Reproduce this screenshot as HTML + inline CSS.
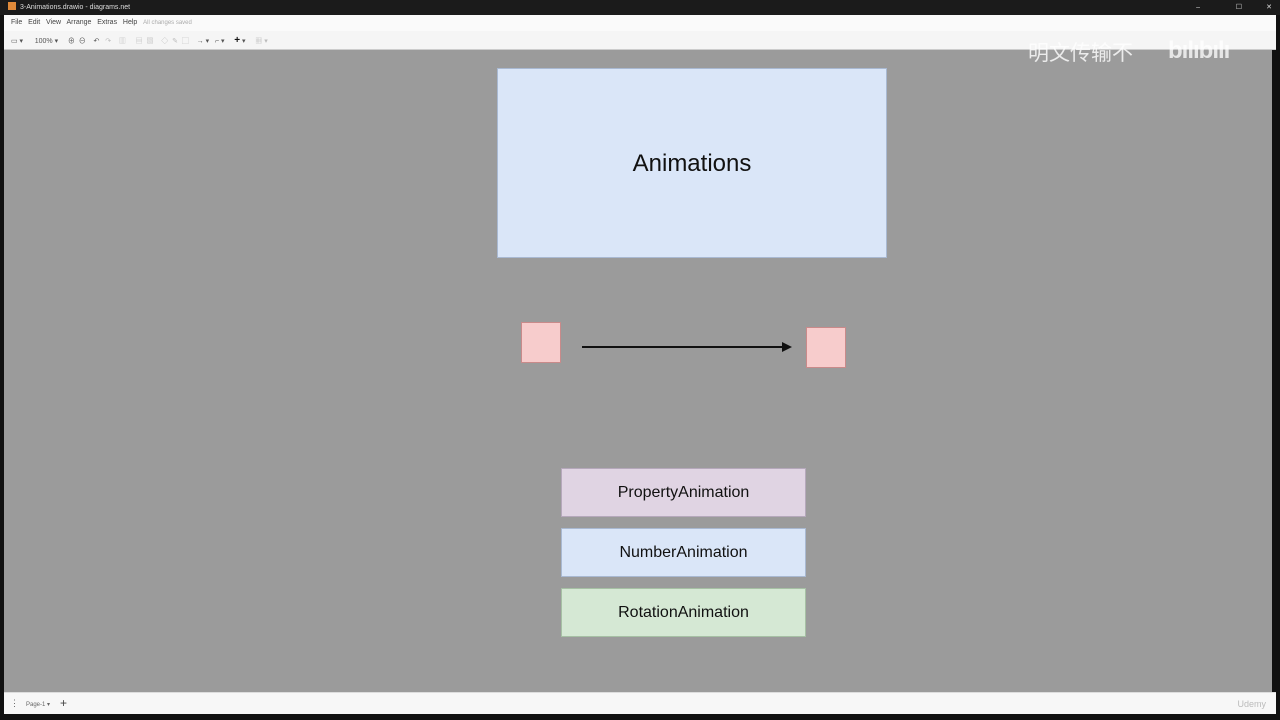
<!DOCTYPE html>
<html><head><meta charset="utf-8"><style>
*{margin:0;padding:0;box-sizing:border-box}
body{width:1280px;height:720px;overflow:hidden;background:#111;font-family:"Liberation Sans","Noto Sans CJK SC",sans-serif;position:relative}
.abs{position:absolute}
#title{left:0;top:0;width:1280px;height:15px;background:#1b1b1b;color:#ddd;font-size:7px;line-height:15px}
#menu{left:4px;top:15px;width:1272px;height:16px;background:#fafafa;font-size:7px;color:#444;line-height:16px}
#tool{left:4px;top:31px;width:1272px;height:19px;background:#f5f5f5;border-bottom:1px solid #ccc;font-size:7px;color:#555;line-height:19px}
#canvas{left:4px;top:50px;width:1268px;height:642px;background:#9b9b9b}
#bot{left:4px;top:692px;width:1272px;height:22px;background:#f7f7f7;border-top:1px solid #ddd;font-size:6px;color:#666}
.box{position:absolute;display:flex;align-items:center;justify-content:center;color:#111}
</style></head><body>
<div id="title" class="abs"><span style="display:inline-block;width:8px;height:8px;background:#e08a3a;margin:0 4px 0 8px;vertical-align:-1px"></span>3-Animations.drawio - diagrams.net
<span style="position:absolute;right:80px">–</span><span style="position:absolute;right:38px">☐</span><span style="position:absolute;right:8px">✕</span></div>
<div id="menu" class="abs"><span style="margin-left:7px">File&nbsp;&nbsp; Edit&nbsp;&nbsp; View&nbsp;&nbsp; Arrange&nbsp;&nbsp; Extras&nbsp;&nbsp; Help&nbsp;&nbsp; <span style="color:#aaa;font-size:6px">All changes saved</span></span></div>
<div id="tool" class="abs"><span style="margin-left:7px">▭ ▾&nbsp;&nbsp;&nbsp;&nbsp;&nbsp; 100% ▾&nbsp;&nbsp;&nbsp;&nbsp; ⊕&nbsp; ⊖&nbsp;&nbsp;&nbsp; ↶&nbsp;&nbsp; <span style="color:#bbb">↷&nbsp;&nbsp;&nbsp; ▥&nbsp;&nbsp;&nbsp;&nbsp; ▤&nbsp; ▧&nbsp;&nbsp;&nbsp; ◇&nbsp; ✎&nbsp; ▢</span>&nbsp;&nbsp;&nbsp; → ▾&nbsp;&nbsp; ⌐ ▾&nbsp;&nbsp;&nbsp;&nbsp; <b style="color:#111;font-size:10px">+</b> ▾&nbsp;&nbsp;&nbsp;&nbsp; <span style="color:#bbb">▦ ▾</span></span></div>
<div id="canvas" class="abs"></div>
<div class="abs" style="left:1028px;top:37px;font-size:21px;color:rgba(255,255,255,.8)">明文传输不</div>
<div class="abs" style="left:1168px;top:37px;font-size:24px;font-weight:bold;color:rgba(255,255,255,.75);letter-spacing:-1px">bılıbılı</div>
<div class="box" style="left:497px;top:68px;width:390px;height:190px;background:#dae6f8;border:1px solid #a9b9d2;font-size:24px;padding-top:2px">Animations</div>
<div class="box" style="left:521px;top:322px;width:40px;height:41px;background:#f7cccc;border:1px solid #c98a8a"></div>
<div class="box" style="left:806px;top:327px;width:40px;height:41px;background:#f7cccc;border:1px solid #c98a8a"></div>
<div class="abs" style="left:582px;top:346px;width:202px;height:2px;background:#111"></div>
<div class="abs" style="left:782px;top:342px;width:0;height:0;border-left:10px solid #111;border-top:5px solid transparent;border-bottom:5px solid transparent"></div>
<div class="box" style="left:561px;top:468px;width:245px;height:49px;background:#e0d4e3;border:1px solid #b5a8bb;font-size:16px">PropertyAnimation</div>
<div class="box" style="left:561px;top:528px;width:245px;height:49px;background:#dae6f8;border:1px solid #a9b9d2;font-size:16px">NumberAnimation</div>
<div class="box" style="left:561px;top:588px;width:245px;height:49px;background:#d5e8d4;border:1px solid #a6c0a4;font-size:16px">RotationAnimation</div>
<div id="bot" class="abs"><span class="abs" style="left:6px;top:5px;font-size:9px">⋮</span><span class="abs" style="left:22px;top:8px">Page-1 ▾</span><span class="abs" style="left:56px;top:3px;font-size:12px;color:#444">+</span><span class="abs" style="right:10px;top:6px;color:#bbb;font-size:9px">Udemy</span></div>
</body></html>
